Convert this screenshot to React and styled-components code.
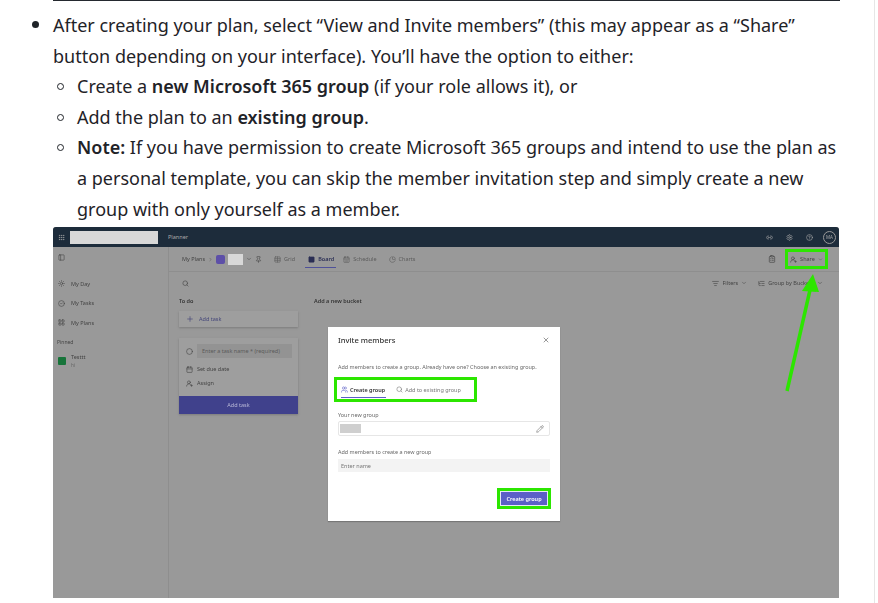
import React from 'react'
import styled, { createGlobalStyle } from 'styled-components'
import {
  Grip, PanelLeft, Sun, CircleCheck, LayoutGrid, Pin, ChevronDown, ChevronRight, Table, SquareKanban,
  CalendarDays, ChartPie, Search, Plus, Circle, Calendar, UserRoundPlus, Link2, Settings, HelpCircle,
  ClipboardList, ListFilter, ListTree, X, Pencil, Users,
} from 'lucide-react'

const GlobalStyle = createGlobalStyle`
  html, body { margin: 0; padding: 0; background: #fff; overflow: hidden; }
  body { font-family: "Noto Sans", "Open Sans", sans-serif; color: #1f2328; }
`

const Page = styled.div`
  height: 603px;
  width: 875px;
  box-sizing: border-box;
  border-right: 1px solid #e6e6e6;
  padding-left: 53px;
`

const Rule = styled.hr`
  width: 787px;
  height: 1px;
  margin: 0 0 9px;
  border: 0;
  background: #24292f;
`

const Para = styled.p`
  position: relative;
  width: 787px;
  margin: 0;
  font-size: 18px;
  line-height: 30.6px;
  &::before {
    content: '';
    position: absolute;
    left: -21px;
    top: 11px;
    width: 7px;
    height: 7px;
    border-radius: 50%;
    background: #1f2328;
  }
`

const SubList = styled.ul`
  list-style: none;
  margin: 0;
  padding: 0 0 0 24px;
`

const SubItem = styled.li`
  position: relative;
  font-size: 18px;
  line-height: 30.6px;
  white-space: nowrap;
  &::before {
    content: '';
    position: absolute;
    left: -20px;
    top: 12px;
    width: 5px;
    height: 5px;
    border: 1px solid #1f2328;
    border-radius: 50%;
  }
  b { font-weight: 600; }
`

const Shot = styled.div`
  position: relative;
  width: 786px;
  height: 371px;
  margin-top: 3px;
  background: #999;
  border-radius: 3px 3px 0 0;
  overflow: hidden;
  color: #444;
  font-size: 5.5px;
  white-space: nowrap;
  filter: blur(0.3px);
`

const TopBar = styled.div`
  display: flex;
  align-items: center;
  height: 20px;
  padding: 0 3px 0 5px;
  background: #1d2c3b;
  color: #aaa;
`

const SearchBlank = styled.div`
  width: 88px;
  height: 13px;
  margin: 0 10px 0 5px;
  background: #d8d8d8;
`

const TopIcons = styled.div`
  display: flex;
  align-items: center;
  gap: 13px;
  margin-left: auto;
`

const Avatar = styled.div`
  display: flex;
  align-items: center;
  justify-content: center;
  width: 11px;
  height: 11px;
  margin-left: -3px;
  border: 1px solid #999;
  border-radius: 50%;
  font-size: 4.5px;
`

const Body = styled.div`
  display: flex;
  height: 351px;
`

const Sidebar = styled.aside`
  display: flex;
  flex-direction: column;
  width: 116px;
  padding: 7px 0 0 5px;
  box-sizing: border-box;
  border-right: 1px solid #8e8e8e;
`

const NavList = styled.div`
  display: flex;
  flex-direction: column;
  gap: 10.5px;
  margin: 18px 0 12px;
`

const NavItem = styled.div`
  display: flex;
  align-items: center;
  gap: 6px;
  height: 9px;
`

const SideLabel = styled.div`
  margin: 0 0 8px -1px;
  font-size: 5px;
`

const PlanRow = styled.div`
  display: flex;
  align-items: center;
  gap: 5px;
  line-height: 8px;
  small { display: block; font-size: 4.5px; color: #666; }
`

const PlanIcon = styled.div`
  width: 8px;
  height: 8px;
  border-radius: 1px;
  background: #17743a;
`

const Main = styled.main`
  flex: 1;
  min-width: 0;
`

const TabBar = styled.div`
  display: flex;
  align-items: center;
  gap: 3px;
  height: 24px;
  padding: 0 11px 0 13px;
  border-bottom: 1px solid #8e8e8e;
`

const PlanBadge = styled.div`
  width: 9px;
  height: 9px;
  border-radius: 2px;
  background: #5d4fa8;
`

const PlanBlank = styled.div`
  width: 15px;
  height: 11px;
  background: #d8d8d8;
`

const Tab = styled.div`
  position: relative;
  display: flex;
  align-items: center;
  gap: 3px;
  height: 100%;
  margin-left: ${p => p.$gap}px;
  color: ${p => (p.$active ? '#2b2f55' : '#5c5c5c')};
  font-weight: ${p => (p.$active ? 600 : 400)};
  ${p => p.$active && `
    &::after {
      content: '';
      position: absolute;
      left: -3px;
      right: -2px;
      bottom: 3px;
      height: 1px;
      background: #4f5199;
    }
  `}
`

const Share = styled.div`
  display: flex;
  align-items: center;
  justify-content: center;
  gap: 3px;
  width: 37px;
  height: 14px;
  margin-left: 6px;
  border: 3px solid #2ce600;
`

const Spacer = styled.div`
  flex: 1;
`

const FilterRow = styled.div`
  display: flex;
  align-items: center;
  gap: 3px;
  height: 22px;
  padding: 0 16px 0 13px;
`

const GroupIcon = styled(ListTree)`
  margin-left: 8px;
`

const GroupLabel = styled.span`
  margin-right: 3px;
`

const Columns = styled.div`
  display: flex;
  gap: 16px;
  padding: 0 0 0 10px;
  font-weight: 600;
`

const Column = styled.div`
  display: flex;
  flex-direction: column;
  width: 119px;
`

const ColumnTitle = styled.div`
  height: 9px;
  margin: 3px 0 5px;
  line-height: 9px;
  color: #333;
`

const AddCard = styled.div`
  display: flex;
  align-items: center;
  gap: 5px;
  height: 16px;
  padding-left: 7px;
  margin-bottom: 11px;
  background: #9e9e9e;
  box-shadow: 0 1px 2px #7c7c7c;
  color: #45477a;
  font-weight: 400;
`

const FormCard = styled.div`
  display: flex;
  flex-direction: column;
  height: 76px;
  background: #9e9e9e;
  box-shadow: 0 1px 2px #7c7c7c;
  font-weight: 400;
`

const FormRow = styled.div`
  display: flex;
  align-items: center;
  gap: 4px;
  height: ${p => (p.$first ? 22 : 14)}px;
  margin-top: ${p => (p.$first ? 2 : 0)}px;
  padding-left: 7px;
`

const NameInput = styled.div`
  display: flex;
  align-items: center;
  width: 95px;
  height: 14px;
  padding-left: 5px;
  box-sizing: border-box;
  background: #939393;
  color: #5a5a5a;
`

const AddButton = styled.div`
  display: flex;
  align-items: center;
  justify-content: center;
  height: 18px;
  margin-top: auto;
  background: #40418c;
  color: #b9b9d8;
`

const Modal = styled.div`
  position: absolute;
  left: 275px;
  top: 100px;
  display: flex;
  flex-direction: column;
  width: 232px;
  height: 194px;
  padding: 8px 10px 0;
  box-sizing: border-box;
  background: #fff;
  box-shadow: 0 1px 1px #777;
  color: #555;
`

const ModalHead = styled.div`
  display: flex;
  align-items: center;
  justify-content: space-between;
  height: 10px;
  font-size: 7.6px;
  font-weight: 500;
  color: #333;
`

const ModalText = styled.div`
  height: 7px;
  margin-top: ${p => p.$top}px;
  line-height: 7px;
  font-size: 5.45px;
  color: #666;
`

const ModalTabs = styled.div`
  display: flex;
  align-items: center;
  width: 143px;
  height: 25px;
  margin: 6px 0 10px -4px;
  padding-left: 4px;
  box-sizing: border-box;
  border: 3px solid #2ce600;
`

const ModalTab = styled.div`
  position: relative;
  display: flex;
  align-items: center;
  gap: 2px;
  height: 100%;
  margin-right: 11px;
  font-weight: ${p => (p.$active ? 600 : 400)};
  color: ${p => (p.$active ? '#333' : '#777')};
  ${p => p.$active && `
    &::after {
      content: '';
      position: absolute;
      left: 0;
      right: -1px;
      bottom: 1px;
      height: 1px;
      background: #5b5fc7;
    }
  `}
`

const GroupInput = styled.div`
  display: flex;
  align-items: center;
  justify-content: space-between;
  height: 15px;
  margin-top: 2px;
  padding: 0 5px 0 1px;
  box-sizing: border-box;
  border: 1px solid #e6e6e6;
  border-radius: 2px;
`

const GroupBlank = styled.div`
  width: 21px;
  height: 9px;
  background: #cfcfcf;
`

const MemberInput = styled.div`
  display: flex;
  align-items: center;
  height: 13px;
  margin-top: 3px;
  padding-left: 3px;
  background: #f3f3f3;
  color: #777;
`

const ModalFoot = styled.div`
  display: flex;
  justify-content: flex-end;
  margin: 16px -1px 0 0;
`

const CreateButton = styled.div`
  display: flex;
  align-items: center;
  justify-content: center;
  width: 54px;
  height: 21px;
  box-sizing: border-box;
  border: 3px solid #2ce600;
  background: #5b5fc7;
  box-shadow: inset 0 0 0 1px #e8e8f6;
  color: #fff;
  font-weight: 600;
`

const Arrow = styled.svg`
  position: absolute;
  left: 725px;
  top: 45px;
`

const App = () => (
  <>
    <GlobalStyle />
    <Page>
      <Rule />
      <Para>
        After creating your plan, select “View and Invite members” (this may appear as a “Share”<br />
        button depending on your interface). You’ll have the option to either:
      </Para>
      <SubList>
        <SubItem>Create a <b>new Microsoft 365 group</b> (if your role allows it), or</SubItem>
        <SubItem>Add the plan to an <b>existing group</b>.</SubItem>
        <SubItem>
          <b>Note:</b> If you have permission to create Microsoft 365 groups and intend to use the plan as<br />
          a personal template, you can skip the member invitation step and simply create a new<br />
          group with only yourself as a member.
        </SubItem>
      </SubList>
      <Shot>
        <TopBar>
          <Grip size={7} />
          <SearchBlank />
          <span>Planner</span>
          <TopIcons>
            <Link2 size={7} />
            <Settings size={7} />
            <HelpCircle size={7} />
            <Avatar>MA</Avatar>
          </TopIcons>
        </TopBar>
        <Body>
          <Sidebar>
            <PanelLeft size={7} />
            <NavList>
              <NavItem><Sun size={7} />My Day</NavItem>
              <NavItem><CircleCheck size={7} />My Tasks</NavItem>
              <NavItem><LayoutGrid size={7} />My Plans</NavItem>
            </NavList>
            <SideLabel>Pinned</SideLabel>
            <PlanRow>
              <PlanIcon />
              <div>Testtt<small>hi</small></div>
            </PlanRow>
          </Sidebar>
          <Main>
            <TabBar>
              My Plans <ChevronRight size={5} />
              <PlanBadge />
              <PlanBlank />
              <ChevronDown size={6} />
              <Pin size={7} />
              <Tab $gap={9}><Table size={7} />Grid</Tab>
              <Tab $gap={10} $active><SquareKanban size={7} fill="#2b2f55" />Board</Tab>
              <Tab $gap={6}><CalendarDays size={7} />Schedule</Tab>
              <Tab $gap={9}><ChartPie size={7} />Charts</Tab>
              <Spacer />
              <ClipboardList size={8} />
              <Share><UserRoundPlus size={7} />Share<ChevronDown size={5} /></Share>
            </TabBar>
            <FilterRow>
              <Search size={7} />
              <Spacer />
              <ListFilter size={7} />
              <span>Filters</span>
              <ChevronDown size={6} />
              <GroupIcon size={7} />
              <GroupLabel>Group by Bucket</GroupLabel>
              <ChevronDown size={6} />
            </FilterRow>
            <Columns>
              <Column>
                <ColumnTitle>To do</ColumnTitle>
                <AddCard><Plus size={8} />Add task</AddCard>
                <FormCard>
                  <FormRow $first><Circle size={7} /><NameInput>Enter a task name * (required)</NameInput></FormRow>
                  <FormRow><Calendar size={7} />Set due date</FormRow>
                  <FormRow><UserRoundPlus size={7} />Assign</FormRow>
                  <AddButton>Add task</AddButton>
                </FormCard>
              </Column>
              <Column>
                <ColumnTitle>Add a new bucket</ColumnTitle>
              </Column>
            </Columns>
          </Main>
        </Body>
        <Modal>
          <ModalHead>Invite members<X size={8} strokeWidth={1.5} /></ModalHead>
          <ModalText $top={19}>Add members to create a group. Already have one? Choose an existing group.</ModalText>
          <ModalTabs>
            <ModalTab $active><Users size={7} color="#5b5fc7" />Create group</ModalTab>
            <ModalTab><Search size={7} />Add to existing group</ModalTab>
          </ModalTabs>
          <ModalText $top={0}>Your new group</ModalText>
          <GroupInput><GroupBlank /><Pencil size={8} strokeWidth={1.5} /></GroupInput>
          <ModalText $top={13}>Add members to create a new group</ModalText>
          <MemberInput>Enter name</MemberInput>
          <ModalFoot><CreateButton>Create group</CreateButton></ModalFoot>
        </Modal>
        <Arrow width="45" height="125" viewBox="0 0 45 125">
          <path d="M9 119 L32 18" stroke="#2ce600" strokeWidth="3.5" fill="none" />
          <path d="M35 2 L24 19 L41 20 Z" fill="#2ce600" />
        </Arrow>
      </Shot>
    </Page>
  </>
)

export default App
